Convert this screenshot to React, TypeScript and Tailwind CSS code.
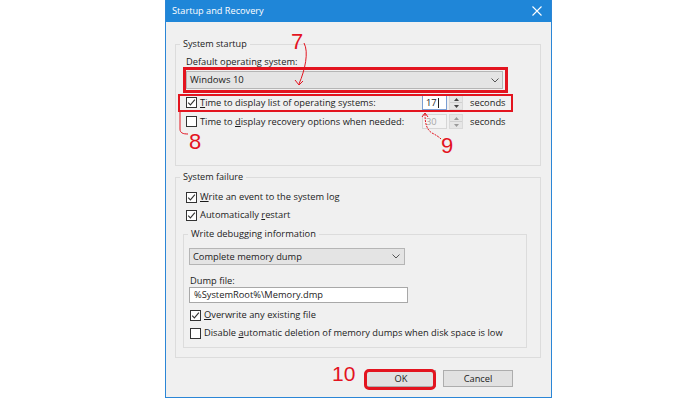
import React from "react";

const RED = "#e3141f";

function Check({ checked }: { checked?: boolean }) {
  return (
    <span className="w-[11px] h-[11px] border border-[#333333] bg-white flex items-center justify-center shrink-0">
      {checked && (
        <svg width="9" height="9" viewBox="0 0 9 9">
          <path d="M1.2 4.6 L3.4 6.9 L7.9 1.6" stroke="#333333" strokeWidth="1.1" fill="none" />
        </svg>
      )}
    </span>
  );
}

function Chevron() {
  return (
    <svg width="8" height="5" viewBox="0 0 8 5">
      <path d="M0.5 0.5 L4 4 L7.5 0.5" stroke="#555" strokeWidth="1" fill="none" />
    </svg>
  );
}

function Spin({ disabled }: { disabled?: boolean }) {
  const c = disabled ? "#9a9a9a" : "#444";
  return (
    <div className="w-[14px] h-[15px] flex flex-col border border-[#d9d9d9] bg-[#e6e6e6]">
      <div className="flex-1 flex items-center justify-center border-b border-[#d0d0d0]">
        <svg width="5" height="3" viewBox="0 0 5 3">
          <path d="M0 3 L2.5 0 L5 3 Z" fill={c} />
        </svg>
      </div>
      <div className="flex-1 flex items-center justify-center">
        <svg width="5" height="3" viewBox="0 0 5 3">
          <path d="M0 0 L2.5 3 L5 0 Z" fill={c} />
        </svg>
      </div>
    </div>
  );
}

export default function App() {
  return (
    <div className="relative w-[700px] h-[400px] bg-white overflow-hidden font-['Open_Sans','Noto_Sans',sans-serif] text-[9.3px] text-[#1b1b1b]">
      {/* Window */}
      <div className="ml-[165px] w-[387px] h-[398px] border-x border-b border-[#2b86d6] flex flex-col bg-[#f0f0f0]">
        <div className="h-[22px] bg-[#1f86d8] flex items-center justify-between pl-[6px] pr-[9px] text-white text-[9.2px] shrink-0">
          <span>Startup and Recovery</span>
          <svg width="10" height="10" viewBox="0 0 10 10">
            <path d="M0.5 0.5 L9.5 9.5 M9.5 0.5 L0.5 9.5" stroke="white" strokeWidth="1.1" />
          </svg>
        </div>

        <div className="flex flex-col pl-[9px] pr-[10px] pt-[15px]">
          {/* System startup */}
          <fieldset className="border border-[#dcdcdc] pb-[35px]">
            <legend className="ml-[4px] px-[3px] leading-[14px] text-[9.1px]">System startup</legend>
            <div className="ml-[10px] mt-[5px] leading-[12px]">Default operating system:</div>
            <div className="ml-[10px] mt-[3px] w-[317px] h-[18px] bg-[#e4e4e4] border border-[#b5b5b5] flex items-center justify-between pl-[3px] pr-[3px]">
              <span className="text-[9.5px]">Windows 10</span>
              <Chevron />
            </div>
            <div className="mt-[5px] h-[17px] flex items-center">
              <div className="ml-[10px]"><Check checked /></div>
              <span className="ml-[3px] w-[222px]"><u>T</u>ime to display list of operating systems:</span>
              <div className="w-[25px] h-[15px] bg-white border border-[#7a9ed2] flex items-center pl-[3px]">17<span className="w-px h-[10px] bg-[#222] ml-[1px]" /></div>
              <div className="ml-[2px]"><Spin /></div>
              <span className="ml-[7px]">seconds</span>
            </div>
            <div className="mt-[2px] h-[17px] flex items-center">
              <div className="ml-[10px]"><Check /></div>
              <span className="ml-[3px] w-[222px]">Time to <u>d</u>isplay recovery options when needed:</span>
              <div className="w-[25px] h-[15px] bg-[#f3f3f3] border border-[#d6d6d6] flex items-center pl-[3px] text-[#a8a8a8]">30</div>
              <div className="ml-[2px]"><Spin disabled /></div>
              <span className="ml-[7px]">seconds</span>
            </div>
          </fieldset>

          {/* System failure */}
          <fieldset className="mt-[4px] border border-[#dcdcdc] pb-[9px]">
            <legend className="ml-[4px] px-[3px] leading-[14px] text-[9.1px]">System failure</legend>
            <div className="mt-[5px] h-[16px] flex items-center">
              <div className="ml-[10px]"><Check checked /></div>
              <span className="ml-[3px]"><u>W</u>rite an event to the system log</span>
            </div>
            <div className="mt-[2px] h-[16px] flex items-center">
              <div className="ml-[10px]"><Check checked /></div>
              <span className="ml-[3px]">Automatically <u>r</u>estart</span>
            </div>

            <fieldset className="mt-[4px] ml-[7px] mr-[13px] border border-[#dcdcdc] pb-[6px]">
              <legend className="ml-[4px] px-[3px] leading-[14px]">Write debugging information</legend>
              <div className="ml-[5px] mt-[7px] w-[216px] h-[17px] bg-[#e4e4e4] border border-[#b5b5b5] flex items-center justify-between pl-[3px] pr-[4px]">
                <span>Complete memory dump</span>
                <Chevron />
              </div>
              <div className="ml-[6px] mt-[10px] leading-[12px]">Dump file:</div>
              <div className="ml-[5px] w-[219px] h-[16px] bg-white border border-[#a8a8a8] flex items-center pl-[4px]">
                %SystemRoot%\Memory.dmp
              </div>
              <div className="mt-[4px] h-[16px] flex items-center">
                <div className="ml-[6px]"><Check checked /></div>
                <span className="ml-[3px]"><u>O</u>verwrite any existing file</span>
              </div>
              <div className="mt-[2px] h-[16px] flex items-center">
                <div className="ml-[6px]"><Check /></div>
                <span className="ml-[3px]">Disable <u>a</u>utomatic deletion of memory dumps when disk space is low</span>
              </div>
            </fieldset>
          </fieldset>

          {/* Buttons */}
          <div className="mt-[12px] flex justify-end gap-[7px] pr-[28px]">
            <div className="w-[70px] h-[17px] bg-[#e1e1e1] border border-[#adadad] flex items-center justify-center">OK</div>
            <div className="w-[70px] h-[17px] bg-[#e1e1e1] border border-[#adadad] flex items-center justify-center">Cancel</div>
          </div>
        </div>
      </div>

      {/* Annotations overlay */}
      <div className="absolute left-[183px] top-[67px] w-[325px] h-[26px] border-[3px] border-[#e3141f]" />
      <div className="absolute left-[178px] top-[94px] w-[335px] h-[18px] border-2 border-[#e3141f]" />
      <div className="absolute left-[364px] top-[369px] w-[72px] h-[21px] border-[3px] border-[#e3141f] rounded-[5px]" />

      <span className="absolute left-[291px] top-[31px] font-['Liberation_Sans',sans-serif] text-[22px] leading-[22px] text-[#e3141f]">7</span>
      <span className="absolute left-[189px] top-[131px] font-['Liberation_Sans',sans-serif] text-[22px] leading-[22px] text-[#e3141f]">8</span>
      <span className="absolute left-[441px] top-[135px] font-['Liberation_Sans',sans-serif] text-[22px] leading-[22px] text-[#e3141f]">9</span>
      <span className="absolute left-[332px] top-[363px] font-['Liberation_Sans',sans-serif] text-[21px] leading-[21px] text-[#e3141f]">10</span>

      <svg className="absolute left-0 top-0 pointer-events-none" width="700" height="400" viewBox="0 0 700 400">
        <path d="M304 43 C309 52, 305 70, 299 84" stroke={RED} strokeWidth="1" fill="none" />
        <path d="M295 80 L299 85 L303 81" stroke={RED} strokeWidth="1" fill="none" />
        <path d="M180 112 L180 129 C180 133, 183 134, 188 134" stroke={RED} strokeWidth="1" fill="none" />
        <path d="M425 114 C425 124, 427 130, 432 133 C436 135, 439 137, 441 139" stroke={RED} strokeWidth="1" strokeDasharray="2 1" fill="none" />
        <path d="M422 117 L425 113 L428 117" stroke={RED} strokeWidth="1" fill="none" />
      </svg>
    </div>
  );
}
